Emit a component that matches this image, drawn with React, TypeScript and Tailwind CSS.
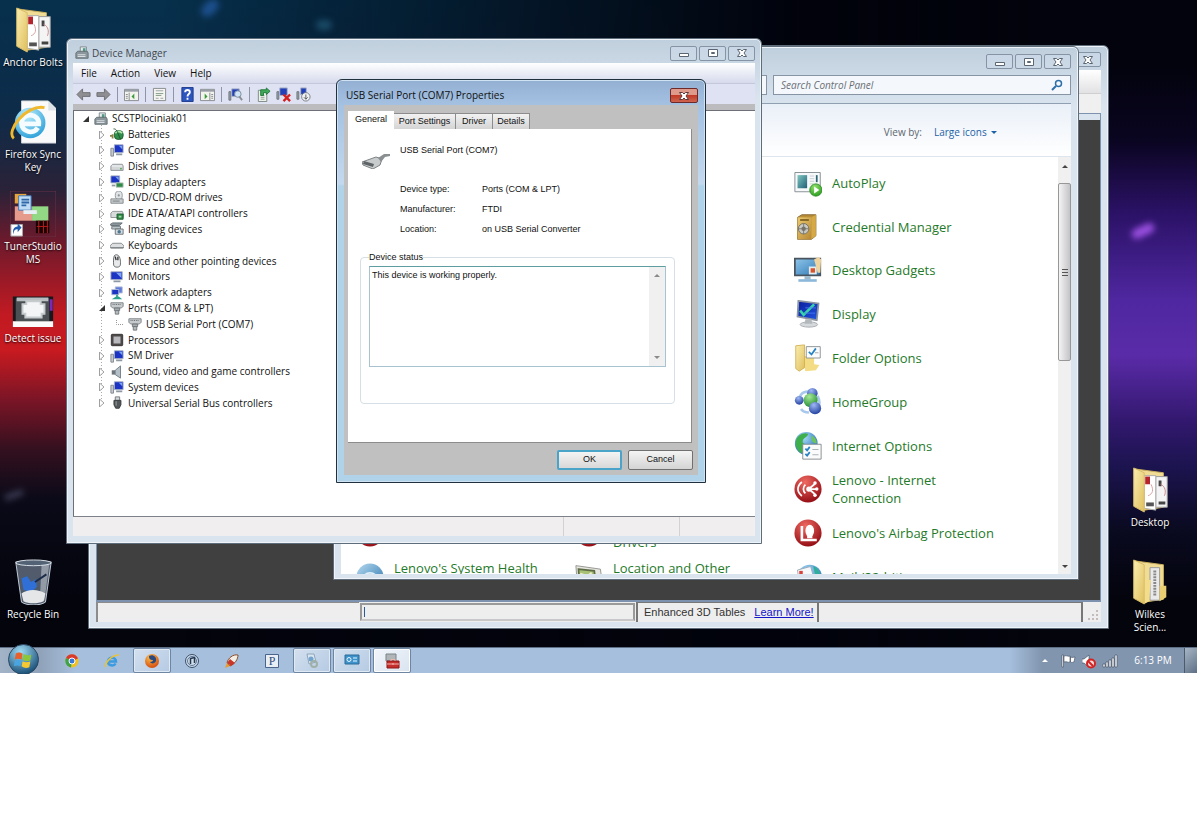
import { ReactNode } from "react";

const smallIcons: Record<string, ReactNode> = {
  root: (
    <>
      <path d="M6 1h7v8H6z" fill="#e8ecec" stroke="#77838a" />
      <path d="M9 2.5h3v5H9z" fill="#4f9a86" />
      <path d="M1 8l2-2h11l1 2v6H1z" fill="#8b969c" stroke="#5f6a70" />
      <path d="M3 10h9M3 12h9" stroke="#e3e8ea" />
    </>
  ),
  battery: (
    <>
      <path d="M0 9h4M3 7v5" stroke="#8a8143" strokeWidth="2" />
      <rect x="5" y="3" width="10" height="10" rx="4" fill="#2f8f4a" stroke="#1d5a2e" />
      <path d="M6 6c3-3 6-2 8 0" stroke="#a8e0a8" strokeWidth="2" fill="none" />
      <path d="M4 1c4 0 4 3 8 12" stroke="#244c2b" fill="none" />
    </>
  ),
  computer: (
    <>
      <path d="M1 6h3v9H1z" fill="#c3c9ce" stroke="#7d858c" />
      <path d="M5 2h10v9H5z" fill="#1b34c4" stroke="#a9b3c4" />
      <path d="M10 3h4v4z" fill="#7da4f2" />
      <path d="M7 13h7" stroke="#8e98a2" strokeWidth="2" />
    </>
  ),
  monitor: (
    <>
      <path d="M1 2h13v9H1z" fill="#1b34c4" stroke="#a9b3c4" />
      <path d="M7 3h6v6z" fill="#7da4f2" />
      <path d="M4 13h8" stroke="#8e98a2" strokeWidth="2" />
    </>
  ),
  disk: (
    <>
      <path d="M1 8l2-2h11l1 2v5H1z" fill="#d4d7d8" stroke="#888e91" />
      <path d="M2 8h12" stroke="#f7f8f8" />
      <circle cx="12.5" cy="11" r="1" fill="#4ba54f" />
    </>
  ),
  display: (
    <>
      <path d="M1 1h10v8H1z" fill="#1b34c4" stroke="#a9b3c4" />
      <path d="M6 2h4v4z" fill="#7da4f2" />
      <path d="M7 9h8v5H7z" fill="#2f8a45" stroke="#b9c6bc" />
      <path d="M2 12h4" stroke="#8e98a2" strokeWidth="2" />
    </>
  ),
  dvd: (
    <>
      <ellipse cx="10" cy="5" rx="4" ry="5" fill="#dfe3e5" stroke="#8b9194" />
      <circle cx="10" cy="5" r="1.2" fill="#8b9194" />
      <path d="M1 9h14v5H1z" fill="#c9cdcf" stroke="#7f8689" />
      <path d="M3 11.5h8" stroke="#6b7275" />
    </>
  ),
  ide: (
    <>
      <path d="M1 7l2-2h11l1 2v5H1z" fill="#d9dcdc" stroke="#888e91" />
      <path d="M8 8h7v6H8z" fill="#2f8a45" stroke="#1c5d2c" />
      <path d="M10 10h3v2h-3z" fill="#a8d4b0" />
    </>
  ),
  imaging: (
    <>
      <path d="M0 3l3-2h11l-3 3H1z" fill="#8b969c" stroke="#5f6a70" />
      <path d="M2 5h10v3H2z" fill="#b9c2c7" stroke="#6d777d" />
      <path d="M6 8h9v6H6z" fill="#d6dbde" stroke="#626b70" />
      <circle cx="10.5" cy="11" r="2" fill="#4d7894" />
    </>
  ),
  keyboard: (
    <>
      <path d="M0 9l3-3h10l3 3v2H0z" fill="#dcdedf" stroke="#7c8285" />
      <path d="M1 11.5h14" stroke="#6c7275" />
    </>
  ),
  mouse: (
    <>
      <path d="M6 1c5-1 6 5 6 9s-1 5-4 5-4-1-4-5 0-8 2-9z" fill="#e8e9ea" stroke="#55595c" />
      <path d="M6 3l1 4M9 3v4" stroke="#333" strokeWidth="1.5" />
    </>
  ),
  network: (
    <>
      <path d="M6 1h8v7H6z" fill="#5e79d8" stroke="#b4bfd9" />
      <path d="M2 4h8v6H2z" fill="#1b34c4" stroke="#b4bfd9" />
      <path d="M2 15l5-3h3l4 3z" fill="#2ea08a" />
      <path d="M8 10v3" stroke="#2ea08a" strokeWidth="2" />
    </>
  ),
  port: (
    <>
      <path d="M1 2h14v4l-2 2H3L1 6z" fill="#c6cacc" stroke="#777e82" />
      <path d="M3 4h10" stroke="#555c60" strokeDasharray="1 1" />
      <path d="M5 8h6v3H5z" fill="#a4aaad" stroke="#6b7276" />
      <path d="M6 11h4v4H6z" fill="#b8bdc0" stroke="#6b7276" />
    </>
  ),
  cpu: (
    <>
      <rect x="1.5" y="1.5" width="13" height="13" rx="1" fill="#4d4949" stroke="#2f2c2c" />
      <path d="M4 4h8v8H4z" fill="#b9b9bd" />
    </>
  ),
  sound: (
    <>
      <path d="M2 6h4v5H2z" fill="#6e767b" />
      <path d="M6 6l6-5v14l-6-4z" fill="#b4bfc8" stroke="#6e7a84" />
    </>
  ),
  usb: (
    <>
      <path d="M6 1h5v4H6z" fill="#d5d8da" stroke="#6b7073" />
      <path d="M4.5 5h8v5l-2 4h-4l-2-4z" fill="#54585b" stroke="#33373a" />
      <path d="M7 6v5" stroke="#a7acaf" />
    </>
  ),
};

type TreeRow = { label: string; icon: string; level: number; state?: "open" | "closed" };

const tree: TreeRow[] = [
  { label: "SCSTPlociniak01", icon: "root", level: 0, state: "open" },
  { label: "Batteries", icon: "battery", level: 1, state: "closed" },
  { label: "Computer", icon: "computer", level: 1, state: "closed" },
  { label: "Disk drives", icon: "disk", level: 1, state: "closed" },
  { label: "Display adapters", icon: "display", level: 1, state: "closed" },
  { label: "DVD/CD-ROM drives", icon: "dvd", level: 1, state: "closed" },
  { label: "IDE ATA/ATAPI controllers", icon: "ide", level: 1, state: "closed" },
  { label: "Imaging devices", icon: "imaging", level: 1, state: "closed" },
  { label: "Keyboards", icon: "keyboard", level: 1, state: "closed" },
  { label: "Mice and other pointing devices", icon: "mouse", level: 1, state: "closed" },
  { label: "Monitors", icon: "monitor", level: 1, state: "closed" },
  { label: "Network adapters", icon: "network", level: 1, state: "closed" },
  { label: "Ports (COM & LPT)", icon: "port", level: 1, state: "open" },
  { label: "USB Serial Port (COM7)", icon: "port", level: 2 },
  { label: "Processors", icon: "cpu", level: 1, state: "closed" },
  { label: "SM Driver", icon: "computer", level: 1, state: "closed" },
  { label: "Sound, video and game controllers", icon: "sound", level: 1, state: "closed" },
  { label: "System devices", icon: "computer", level: 1, state: "closed" },
  { label: "Universal Serial Bus controllers", icon: "usb", level: 1, state: "closed" },
];

const indents = ["pl-2", "pl-6", "pl-[42px]"];

const panelIcons: Record<string, ReactNode> = {
  autoplay: (
    <>
      <path d="M1 4h29v22H1z" fill="#f6f8f9" stroke="#7b858c" />
      <path d="M4 7h11v15H4z" fill="url(#teal)" />
      <path d="M18 8h5M18 11h5M18 14h5M18 17h4" stroke="#c3ccd2" />
      <path d="M26 7v8" stroke="#2c6372" strokeWidth="2" />
      <circle cx="25" cy="24" r="7" fill="url(#play)" stroke="#2b8a22" />
      <path d="M23 20l6 4-6 4z" fill="#fff" />
    </>
  ),
  credential: (
    <>
      <path d="M4 5l5-3h16v24l-5 4H4z" fill="#b98f37" stroke="#80602a" />
      <path d="M4 5h16v25H4z" fill="url(#gold)" />
      <path d="M20 5l5-3v24l-5 4z" fill="#d5a946" />
      <circle cx="11" cy="18" r="6" fill="#c9c9c4" stroke="#6c6a60" />
      <circle cx="11" cy="18" r="2.5" fill="#76746a" />
      <path d="M11 12v12M5 18h12" stroke="#76746a" />
      <path d="M7 8h10" stroke="#7d6021" strokeWidth="2" />
    </>
  ),
  gadgets: (
    <>
      <path d="M1 3h29v19H1z" fill="url(#sky)" stroke="#49545e" strokeWidth="2" />
      <path d="M12 23h7v4h-7z" fill="#9db9cc" />
      <path d="M5 28h21" stroke="#8db8da" strokeWidth="3" />
      <path d="M17 12h9v9h-9z" fill="#e5ecef" />
      <path d="M19 14h5v5h-5z" fill="#d9542b" />
      <path d="M23 4l5-3 3 3-1 15h-3z" fill="#efd4a0" />
    </>
  ),
  display: (
    <>
      <path d="M5 1l23 3-2 19-22-4z" fill="url(#navy)" stroke="#8b94a0" strokeWidth="2" />
      <path d="M7 12l4 5L23 5" stroke="#37d4a8" strokeWidth="3" fill="none" />
      <path d="M13 9h12M12 15h12" stroke="#4a7cf0" />
      <ellipse cx="17" cy="28" rx="10" ry="3" fill="#d6d9dc" stroke="#a3a8ad" />
      <path d="M13 22h7l1 5h-9z" fill="#b3b8bd" />
    </>
  ),
  folder: (
    <>
      <path d="M9 14l14-1v10l6 1-4 6-12 1z" fill="#f3dc84" />
      <path d="M2 2l10-1v26l-6 4-4-3z" fill="url(#folder)" stroke="#d1b054" />
      <path d="M14 3h16v13H14z" fill="#fcfcfc" stroke="#858b8f" />
      <path d="M17 9l3 3 5-7" stroke="#2783c4" strokeWidth="2" fill="none" />
      <path d="M24 10h4" stroke="#97a0a6" />
    </>
  ),
  homegroup: (
    <>
      <path d="M6 12C8 4 14 3 21 5M27 9c3 6 3 10 0 15M8 24c2 3 5 4 9 4" stroke="#a8c8ec" strokeWidth="3" fill="none" />
      <circle cx="21" cy="6" r="6" fill="url(#ball)" />
      <circle cx="6" cy="14" r="5" fill="url(#ball)" />
      <circle cx="19" cy="14" r="8" fill="url(#green)" />
      <circle cx="24" cy="23" r="7" fill="url(#ball)" />
    </>
  ),
  internet: (
    <>
      <circle cx="14" cy="13" r="13" fill="url(#ball2)" />
      <path d="M4 6c5-5 9-5 12-4 0 4-5 4-6 8s4 3 4 7-3 6-6 7C2 20 0 12 4 6z" fill="#3fae4c" />
      <path d="M20 4c4 2 6 5 6 9-3 0-5-2-6-4z" fill="#6cc45c" />
      <path d="M10 14h21v17H10z" fill="#fbfbfb" stroke="#7e868b" />
      <path d="M13 19l2 2 3-4M13 25l2 2 3-4" stroke="#2783c4" strokeWidth="2" fill="none" />
      <path d="M21 20h7M21 26h7" stroke="#a1a8ad" />
    </>
  ),
  connection: (
    <>
      <circle cx="16" cy="16" r="15.5" fill="url(#red)" />
      <path d="M9 8c-6 5-6 11 0 16M13 11c-3 3-3 7 0 10" stroke="#fff" strokeWidth="2" fill="none" />
      <circle cx="17" cy="16" r="3" fill="#fff" />
      <path d="M17 16h9M17 16l7-6M17 16l7 6" stroke="#fff" strokeWidth="2" />
      <circle cx="26" cy="16" r="2" fill="#fff" />
      <circle cx="24" cy="9" r="2" fill="#fff" />
      <circle cx="24" cy="23" r="2" fill="#fff" />
    </>
  ),
  airbag: (
    <>
      <circle cx="16" cy="16" r="15.5" fill="url(#red)" />
      <path d="M9 8v16h17" stroke="#fff" strokeWidth="3" fill="none" />
      <ellipse cx="18" cy="13.5" rx="5" ry="7" fill="#fff" />
      <path d="M15 19h6v3h-6z" fill="#fff" />
    </>
  ),
  red: <circle cx="16" cy="16" r="15.5" fill="url(#red)" />,
  mail: (
    <>
      <circle cx="18" cy="16" r="14" fill="url(#ball2)" />
      <path d="M22 3c7 4 9 8 8 16-5-2-7-8-8-16z" fill="#2fae9c" />
      <path d="M4 8l15-4 4 14-17 5z" fill="#f6f8fa" stroke="#97a7b5" />
      <path d="M6 9h4v4H6z" fill="#d8423a" />
    </>
  ),
  health: (
    <>
      <circle cx="16" cy="16" r="15.5" fill="url(#steel)" />
      <path d="M9 15c3-5 11-5 14 0M9 18h14" stroke="#e0f1fb" strokeWidth="2" fill="none" />
    </>
  ),
  location: (
    <>
      <path d="M1 3l28 4 3 20-29 2z" fill="#e6e7e1" stroke="#8b8d86" />
      <path d="M4 7l18 2 2 14H5z" fill="#a7c276" stroke="#5e6b46" strokeWidth="2" />
      <path d="M6 12l8 3 5-4" stroke="#f2f2c9" strokeWidth="2" fill="none" />
    </>
  ),
};

const panelItems = [
  { label: "AutoPlay", icon: "autoplay" },
  { label: "Credential Manager", icon: "credential" },
  { label: "Desktop Gadgets", icon: "gadgets" },
  { label: "Display", icon: "display" },
  { label: "Folder Options", icon: "folder" },
  { label: "HomeGroup", icon: "homegroup" },
  { label: "Internet Options", icon: "internet" },
  { label: "Lenovo - Internet Connection", icon: "connection" },
  { label: "Lenovo's Airbag Protection", icon: "airbag" },
  { label: "Mail (32-bit)", icon: "mail" },
];

function Gradients() {
  const linear: [string, string, string][] = [
    ["teal", "#7fc8c0", "#205f78"],
    ["gold", "#ecca72", "#b78732"],
    ["sky", "#8fc6ea", "#2f78b5"],
    ["navy", "#0a1c9e", "#2357e0"],
    ["folder", "#fbeeb0", "#dfbf5e"],
    ["steel", "#b5daf0", "#2873ab"],
  ];
  const radial: [string, string, string][] = [
    ["play", "#8fe06a", "#2a9a20"],
    ["ball", "#9fb8f4", "#1c3c9c"],
    ["ball2", "#a5dcf8", "#1f64b0"],
    ["ie", "#bdeefc", "#2a9fd8"],
    ["green", "#a5e898", "#1f8a2e"],
    ["red", "#f06a62", "#8f0810"],
    ["orb", "#9fdcf6", "#12466e"],
    ["fox", "#ffc04a", "#d1470d"],
  ];
  return (
    <svg className="absolute h-0 w-0" aria-hidden="true">
      <defs>
        {linear.map(([id, from, to]) => (
          <linearGradient key={id} id={id} x1="0" y1="0" x2="1" y2="1">
            <stop offset="0" stopColor={from} />
            <stop offset="1" stopColor={to} />
          </linearGradient>
        ))}
        {radial.map(([id, from, to]) => (
          <radialGradient key={id} id={id} cx="0.4" cy="0.25" r="0.8">
            <stop offset="0" stopColor={from} />
            <stop offset="1" stopColor={to} />
          </radialGradient>
        ))}
      </defs>
    </svg>
  );
}

function SmallIcon({ children, className = "h-3.5 w-3.5" }: { children: ReactNode; className?: string }) {
  return (
    <svg viewBox="0 0 16 16" fill="none" className={`flex-none ${className}`}>
      {children}
    </svg>
  );
}

function Caret({ dir }: { dir: "up" | "down" }) {
  return (
    <svg viewBox="0 0 6 3" className="h-[3px] w-[6px]">
      <path d={dir === "up" ? "M0 3l3-3 3 3z" : "M0 0l3 3 3-3z"} fill="currentColor" />
    </svg>
  );
}

function WindowButton({ kind }: { kind: "Minimize" | "Maximize" | "Close" }) {
  return (
    <button
      type="button"
      aria-label={kind}
      className="grid h-[15px] w-[27px] place-items-center rounded-xs border border-[#8594a5] bg-[#cddbe9]/60"
    >
      <svg viewBox="0 0 12 10" className="h-2.5 w-3" fill="#fff" stroke="#5b6673">
        {kind === "Minimize" && <path d="M1.5 5.5h9v3h-9z" />}
        {kind === "Maximize" && (
          <>
            <path d="M1.5 1.5h9v7h-9z" />
            <path d="M4.5 4.5h3v1h-3z" />
          </>
        )}
        {kind === "Close" && <path d="M1.5 1.5h3L6 3l1.5-1.5h3L8 5l2.5 3.5h-3L6 7 4.5 8.5h-3L4 5z" />}
      </svg>
    </button>
  );
}

function WindowButtons() {
  return (
    <div className="flex gap-0.5">
      <WindowButton kind="Minimize" />
      <WindowButton kind="Maximize" />
      <WindowButton kind="Close" />
    </div>
  );
}

function Window({ children, className }: { children: ReactNode; className: string }) {
  return (
    <section
      className={`absolute flex flex-col rounded-t-md border border-[#5f6c7a] bg-[#d9e4ef] bg-[linear-gradient(#c0cfdd,#d9e4ef_60px)] shadow-[inset_0_0_0_1px_#eef4fa] ${className}`}
    >
      {children}
    </section>
  );
}

function TunerWindow() {
  return (
    <Window className="left-[88px] top-[45px] h-[584px] w-[1021px] px-[7px] pb-1.5">
      <div className="flex h-6 flex-none items-start justify-end pt-1.5">
        <WindowButton kind="Close" />
      </div>
      <div className="h-[23px] flex-none bg-gradient-to-b from-white to-[#e2e2e4]" />
      <div className="h-5 flex-none border-t border-[#d0d0d0] bg-[#f0f0f0]" />
      <div className="flex-1 border border-b-2 border-[#7c92ae] bg-[#404040] shadow-[inset_0_6px_0_#d9e4ef]" />
      <div className="flex h-5 flex-none bg-[#eeeeee] font-['Liberation_Sans',sans-serif] text-[11px] text-[#333]">
        <div className="w-[263px] border-l-2 border-t border-[#8c8c8c]" />
        <div className="m-px w-[275px] border-2 border-[#9a9a9a] border-b-[#c8c8c8] py-0.5 pl-0.5">
          <div className="h-full w-px bg-[#2a5a9a]" />
        </div>
        <div className="flex w-[181px] items-center gap-[9px] whitespace-nowrap border-l-2 border-t border-[#777] pl-1.5">
          <span>Enhanced 3D Tables</span>
          <a href="#learn" className="text-[#1414c8] underline">
            Learn More!
          </a>
        </div>
        <div className="flex-1 border-l-2 border-r-2 border-t border-[#777]" />
        <svg viewBox="0 0 18 20" className="h-5 w-[18px]" fill="#c4bcbc">
          <path d="M13 8h2v2h-2zM13 12h2v2h-2zM13 16h2v2h-2zM9 12h2v2H9zM9 16h2v2H9zM5 16h2v2H5z" />
        </svg>
      </div>
    </Window>
  );
}

function PanelItem({ label, icon, labelClass = "" }: { label?: string; icon: string; labelClass?: string }) {
  return (
    <a href="#item" className="flex items-center gap-2.5 text-[13px] leading-[18px] text-[#1f7a2a]">
      <svg viewBox="0 0 32 32" fill="none" className="h-7 w-7 flex-none">
        {panelIcons[icon]}
      </svg>
      {label && <span className={`w-[170px] ${labelClass}`}>{label}</span>}
    </a>
  );
}

function ControlPanelWindow() {
  return (
    <Window className="left-[333px] top-[46px] h-[534px] w-[746px] px-[7px] pb-[5px]">
      <div className="flex flex-none justify-end pt-[7px]">
        <WindowButtons />
      </div>
      <div className="mb-2 mt-1.5 flex h-5 flex-none gap-1.5">
        <div className="flex-1 border border-[#8794a3] bg-[#f4f8fc]" />
        <label className="flex w-[298px] items-center border border-[#8794a3] bg-[#f4f8fc] px-[7px]">
          <input
            type="search"
            aria-label="Search Control Panel"
            placeholder="Search Control Panel"
            className="min-w-0 flex-1 bg-transparent text-[10px] italic outline-none placeholder:text-[#6a6f76]"
          />
          <svg viewBox="0 0 12 12" className="h-3 w-3" fill="none" stroke="#2f6fa8">
            <circle cx="7.5" cy="4.5" r="3" strokeWidth="1.5" />
            <path d="M5 7l-4 4" strokeWidth="2" />
          </svg>
        </label>
      </div>
      <div className="flex h-[54px] flex-none items-center justify-end gap-3 border-b border-t border-b-[#dfe5ec] border-t-[#8fa0b2] bg-gradient-to-b from-[#eaf0f8] to-white pr-[74px] pt-1 text-[10px]">
        <label htmlFor="view" className="text-[#5d6670]">
          View by:
        </label>
        <div className="flex items-center gap-1 text-[#1c62a8]">
          <select id="view" className="appearance-none outline-none">
            <option>Large icons</option>
          </select>
          <Caret dir="down" />
        </div>
      </div>
      <div className="flex min-h-0 flex-1 overflow-hidden bg-white">
        <div className="flex flex-1 pl-[15px] pt-1">
          <div className="grid h-[438px] w-[219px] grid-rows-10">
            <div className="row-span-8" />
            <PanelItem icon="red" />
            <PanelItem label="Lenovo's System Health" icon="health" labelClass="pb-[18px]" />
          </div>
          <div className="grid h-[438px] w-[219px] grid-rows-10">
            <div className="row-span-8" />
            <PanelItem label="Drivers" icon="red" labelClass="pt-[18px]" />
            <PanelItem label="Location and Other" icon="location" labelClass="pb-[18px]" />
          </div>
          <div className="grid h-[438px] flex-1 grid-rows-10">
            {panelItems.map((item) => (
              <PanelItem key={item.label} {...item} />
            ))}
          </div>
        </div>
        <div className="flex w-[13px] flex-none flex-col items-center bg-[#f0f0f0] text-[#444]">
          <div className="grid h-[26px] flex-none place-items-center pb-2">
            <Caret dir="up" />
          </div>
          <div className="grid h-[178px] w-full flex-none place-items-center rounded-xs border border-[#979797] bg-gradient-to-r from-[#f4f4f4] to-[#c4c4c8]">
            <svg viewBox="0 0 6 7" className="h-[7px] w-[6px]" stroke="#555">
              <path d="M0 .5h6M0 3.5h6M0 6.5h6" />
            </svg>
          </div>
          <div className="mt-auto grid h-4 place-items-center">
            <Caret dir="down" />
          </div>
        </div>
      </div>
    </Window>
  );
}

const pane = (
  <>
    <path d="M.5 2.5h15v12H.5z" fill="#f2f3ec" stroke="#85898f" />
    <path d="M1 4h14" stroke="#9a9ea6" strokeWidth="2" />
  </>
);

const toolGroups: { name: string; icon: ReactNode }[][] = [
  [
    { name: "Back", icon: <path d="M1 8l6-6v4h8v4H7v4z" fill="#8f8f93" stroke="#6d6d72" /> },
    { name: "Forward", icon: <path d="M15 8L9 2v4H1v4h8v4z" fill="#8f8f93" stroke="#6d6d72" /> },
  ],
  [
    {
      name: "Show tree",
      icon: (
        <>
          {pane}
          <path d="M5.5 6v8M2 8h2M2 10h2M2 12h2" stroke="#85898f" />
          <path d="M11 7l-3 3 3 3z" fill="#3c9a3a" />
        </>
      ),
    },
  ],
  [
    {
      name: "Properties",
      icon: (
        <>
          <path d="M1.5 1.5h13v13h-13z" fill="#f5f5f0" stroke="#85898f" />
          <path d="M4 4h8M4 12h3M9 12h3" stroke="#9a9ea6" />
          <path d="M4 7h8M4 9h6" stroke="#7f9a86" />
        </>
      ),
    },
  ],
  [
    {
      name: "Help",
      icon: (
        <>
          <path d="M2 .5h12v15H2z" fill="#2c55bd" stroke="#1c3a8c" />
          <path d="M5.5 5.5c0-3 5-3 5 0 0 2-2.5 2-2.5 4.5M8 11.5v2" stroke="#fff" strokeWidth="2" />
        </>
      ),
    },
    {
      name: "Action pane",
      icon: (
        <>
          {pane}
          <path d="M10.5 6v8M12 8h2M12 10h2M12 12h2" stroke="#85898f" />
          <path d="M5 7l3 3-3 3z" fill="#3c9a3a" />
        </>
      ),
    },
  ],
  [
    {
      name: "Scan for hardware changes",
      icon: (
        <>
          <path d="M1 5h2v9H1z" fill="#9aa2aa" stroke="#6b737b" />
          <path d="M4 2h8v8H4z" fill="#2440b8" stroke="#aab3c4" />
          <circle cx="10.5" cy="7.5" r="3.5" fill="#cfe4f6" stroke="#7a8a9c" />
          <path d="M12 10l3 4" stroke="#8a8f96" strokeWidth="2" />
        </>
      ),
    },
  ],
  [
    {
      name: "Update driver",
      icon: (
        <>
          <path d="M2.5 3.5h9v12h-9z" fill="#eef0ee" stroke="#7a8a80" />
          <path d="M5 9h4M5 11h4M5 13h4" stroke="#8fa095" />
          <path d="M5 3h6V1l4 3.5L11 8V6H8v3H5z" fill="#3fa85a" stroke="#237a3b" />
        </>
      ),
    },
    {
      name: "Uninstall",
      icon: (
        <>
          <path d="M1 5h2v8H1z" fill="#9aa2aa" stroke="#6b737b" />
          <path d="M4 1h8v8H4z" fill="#2440b8" stroke="#aab3c4" />
          <path d="M8 8l7 7M15 8l-7 7" stroke="#d41f1f" strokeWidth="2.5" />
        </>
      ),
    },
    {
      name: "Disable",
      icon: (
        <>
          <path d="M1 5h2v8H1z" fill="#9aa2aa" stroke="#6b737b" />
          <path d="M5 1h6v7H5z" fill="#2440b8" stroke="#aab3c4" />
          <circle cx="10.5" cy="10.5" r="4.5" fill="#f0f1f3" stroke="#777e86" />
          <path d="M10.5 8v5M8.5 11l2 2 2-2" stroke="#555" />
        </>
      ),
    },
  ],
];

function TreeItem({ row }: { row: TreeRow }) {
  return (
    <li className={`flex flex-1 items-center gap-1 ${indents[row.level]}`}>
      <svg viewBox="0 0 8 8" fill="none" className="h-2 w-2 flex-none">
        {row.state === "open" && <path d="M7 1v6H1z" fill="#333" />}
        {row.state === "closed" && <path d="M1.5 0v8l4.5-4z" fill="#fff" stroke="#a0a0a0" />}
        {!row.state && <path d="M.5 0v4.5H8" stroke="#999" strokeDasharray="1 1" />}
      </svg>
      <SmallIcon>{smallIcons[row.icon]}</SmallIcon>
      <span className="whitespace-nowrap">{row.label}</span>
    </li>
  );
}

function DeviceManagerWindow() {
  return (
    <Window className="left-[66px] top-[38px] h-[506px] w-[696px] px-1.5 pb-[7px]">
      <header className="flex h-6 flex-none items-center gap-[3px] pl-0.5 pt-1 text-[10px] text-[#3e4650]">
        <SmallIcon>{smallIcons.root}</SmallIcon>
        <h1 className="flex-1">Device Manager</h1>
        <WindowButtons />
      </header>
      <nav className="flex h-5 flex-none items-center gap-[14px] bg-gradient-to-b from-white to-[#d6daec] pl-2 text-[10px] text-[#111]">
        {["File", "Action", "View", "Help"].map((name) => (
          <button key={name} type="button">
            {name}
          </button>
        ))}
      </nav>
      <div className="flex h-[21px] flex-none items-center border-t border-[#c3c8da] bg-[#dfe2f2] pl-[3px]">
        {toolGroups.map((group, i) => (
          <div
            key={i}
            className="flex items-center gap-[5px] border-r border-[#8f94a8] px-1.5 first:pl-0 last:border-r-0"
          >
            {group.map((tool) => (
              <button key={tool.name} type="button" aria-label={tool.name}>
                <SmallIcon className="h-[15px] w-[15px]">{tool.icon}</SmallIcon>
              </button>
            ))}
          </div>
        ))}
      </div>
      <div className="h-[6px] flex-none bg-[#bcbcbe]" />
      <div className="flex-1 border-l border-t border-[#6d7177] bg-white">
        <ul className="flex h-[300px] flex-col bg-[repeating-linear-gradient(#aaa_0_1px,transparent_1px_3px)] bg-[length:1px_280px] bg-[position:27px_14px] bg-no-repeat text-[10px] text-[#111]">
          {tree.map((row) => (
            <TreeItem key={row.label} row={row} />
          ))}
        </ul>
      </div>
      <footer className="flex h-5 flex-none border-t border-[#7d8188] bg-[#f0eeee]">
        <div className="flex-1" />
        <div className="w-[116px] border-l border-[#d3d1d1]" />
        <div className="w-[76px] border-l border-[#d3d1d1]" />
      </footer>
    </Window>
  );
}

const details = [
  ["Device type:", "Ports (COM & LPT)"],
  ["Manufacturer:", "FTDI"],
  ["Location:", "on USB Serial Converter"],
];

function PropertiesDialog() {
  return (
    <section
      role="dialog"
      aria-labelledby="dialog-title"
      className="absolute left-[336px] top-[79px] flex h-[404px] w-[370px] flex-col rounded-t-md border border-[#20303c] bg-[linear-gradient(#93afd2,#a5c2e3_26px,#c4d9ee_104px,#b0d3ea_106px)] px-[7px] pb-[7px] font-['Liberation_Sans',sans-serif] text-[9px] text-[#111] shadow-[inset_0_0_0_1px_#cfe2f4]"
    >
      <header className="flex h-[25px] flex-none items-center justify-between pb-0.5 pl-0.5 pt-2">
        <h2 id="dialog-title" className="font-['Open_Sans',sans-serif] text-[10px]">
          USB Serial Port (COM7) Properties
        </h2>
        <button
          type="button"
          aria-label="Close"
          className="grid h-[15px] w-7 place-items-center rounded-xs border border-[#6d2a28] bg-[linear-gradient(#e09a8c_45%,#c03a26_50%,#cf6450)]"
        >
          <svg viewBox="0 0 12 10" className="h-2.5 w-3" fill="#fff" stroke="#5b3a3a">
            <path d="M1.5 1.5h3L6 3l1.5-1.5h3L8 5l2.5 3.5h-3L6 7 4.5 8.5h-3L4 5z" />
          </svg>
        </button>
      </header>
      <div className="flex flex-1 flex-col bg-[#c0c0c0] px-1 pt-1.5">
        <div role="tablist" className="flex h-[18px] flex-none items-end">
          <button type="button" role="tab" aria-selected="true" className="h-[18px] w-[46px] bg-white">
            General
          </button>
          {[
            ["Port Settings", "w-[62px]"],
            ["Driver", "w-[37px]"],
            ["Details", "w-[37px]"],
          ].map(([name, width]) => (
            <button
              key={name}
              type="button"
              role="tab"
              aria-selected="false"
              className={`h-4 border border-b-0 border-l-0 border-[#8c8c8c] bg-gradient-to-b from-[#f2f2f2] to-[#d4d4d4] ${width}`}
            >
              {name}
            </button>
          ))}
        </div>
        <div className="mr-[2px] flex-1 border-b border-r border-[#8c8c8c] bg-white px-3 pt-3">
          <div className="flex h-5 items-center gap-2.5 pl-0.5">
            <svg viewBox="0 0 28 16" className="mt-5 h-4 w-7" fill="none">
              <path d="M0 9l14-5 6 2-2 6-7 4L1 12z" fill="#c9cccd" stroke="#7d8284" />
              <path d="M1 11l10 3 1-3L2 8z" fill="#5f6466" />
              <path d="M16 5l6-4h6v2l-5 1-4 5z" fill="#8a8f91" />
            </svg>
            <p>USB Serial Port (COM7)</p>
          </div>
          <dl className="mt-[18px] grid grid-cols-[82px_1fr] pl-10 leading-5">
            {details.map(([term, value]) => (
              <div key={term} className="contents">
                <dt>{term}</dt>
                <dd>{value}</dd>
              </div>
            ))}
          </dl>
          <fieldset className="mr-1 mt-3 rounded-sm border border-[#d5dfe5] px-2 pb-9">
            <legend className="leading-3">
              <label htmlFor="status">Device status</label>
            </legend>
            <div className="mt-[3px] flex h-[101px] border border-[#a6c3cf] border-t-[#5f9ea0]">
              <textarea
                id="status"
                readOnly
                value="This device is working properly."
                className="flex-1 resize-none px-0.5 py-0.5 leading-3 outline-none"
              />
              <div className="flex w-4 flex-col items-center justify-between bg-[#f0f0f0] py-[7px] text-[#8a8a8a]">
                <Caret dir="up" />
                <Caret dir="down" />
              </div>
            </div>
          </fieldset>
        </div>
        <div className="flex h-8 flex-none items-center justify-end gap-1.5 pr-px pt-0.5">
          <button
            type="button"
            className="h-5 w-[65px] rounded-xs border-2 border-[#4aa3c8] bg-gradient-to-b from-[#f4f4f4] to-[#d8d8d8]"
          >
            OK
          </button>
          <button
            type="button"
            className="h-5 w-[65px] rounded-xs border border-[#707070] bg-gradient-to-b from-[#f4f4f4] to-[#d4d4d4]"
          >
            Cancel
          </button>
        </div>
      </div>
    </section>
  );
}

const folderBack = <path d="M8 2l30 4v36l-20 3-10-6z" fill="#f0dc94" stroke="#cbb05c" />;
const folderFront = <path d="M7 1l11 5v41L7 41z" fill="url(#folder)" stroke="#d8bd68" />;

const pdfFolder = (
  <>
    {folderBack}
    <path d="M30 10h12v32H30z" fill="#f4f4f4" stroke="#999" />
    <path d="M33 14h3v6h-3zM33 36h7v3h-7z" fill="#444" />
    <path d="M35 18c5 2 6 8 4 12" stroke="#c9868a" />
    <path d="M18 9h12v36l-12-2z" fill="#fff" stroke="#aaa" />
    <path d="M19 10h5v8h-5z" fill="#b5232b" />
    <path d="M22 30c5-2 6-6 3-12" stroke="#d9a0a0" />
    <path d="M20 37h8v4h-8z" fill="#555" />
    {folderFront}
  </>
);

const desktopIcons: Record<string, ReactNode> = {
  anchor: pdfFolder,
  desktop: pdfFolder,
  wilkes: (
    <>
      {folderBack}
      <path d="M24 9h10v34H24z" fill="#e9e9e9" stroke="#999" />
      <path d="M29 12v26" stroke="#888" strokeWidth="3" strokeDasharray="2 1" />
      <path d="M34 28h7v12l-7 4z" fill="#e9cf72" />
      <path d="M18 22h7l-2 22-5 3z" fill="#f3dd8c" />
      {folderFront}
    </>
  ),
  sync: (
    <>
      <path d="M12 2h28l10 10v34H12z" fill="#fafafa" stroke="#cdd2d6" />
      <path d="M40 2v10h10z" fill="#dde2e6" />
      <circle cx="21" cy="25" r="16" fill="url(#ie)" />
      <path d="M12 26h18c1-11-17-13-18-1 0 10 13 12 17 5" stroke="#f4fcff" strokeWidth="5" fill="none" />
      <path d="M4 41C-5 34 17 5 36 9" stroke="#f0b82c" strokeWidth="3" fill="none" />
    </>
  ),
  tuner: (
    <>
      <path d="M0 0h48v48H0z" stroke="#6b3348" />
      <path d="M5 3h12v10H5z" fill="#e8a33c" />
      <path d="M5 16h18v15H5z" fill="#e59a8c" />
      <path d="M23 16h17v15H23z" fill="#93d884" />
      <path d="M9 5h13v15H9z" fill="#bfdcf4" stroke="#3f78b8" />
      <path d="M12 9h8M12 12h8M12 15h5" stroke="#2f67a8" strokeWidth="2" />
      <path d="M14 22h14" stroke="#e8eef5" strokeWidth="4" />
      <path d="M27 31h14v13H27z" fill="#180405" />
      <path d="M30 31v13M35 31v13M39 31v13M28 37h12" stroke="#b81d1d" />
      <path d="M1 35h12v12H1z" fill="#fff" stroke="#aaa" />
      <path d="M4 45c0-4 1-5 4-5v3l4-5-4-4v3c-4 0-6 4-4 8z" fill="#1f5db0" />
    </>
  ),
  detect: (
    <>
      <path d="M3 14h42v30H3z" fill="#17181d" />
      <path d="M6 16h35v24H6z" fill="#4b5054" />
      <path d="M7 15h33v4H7z" fill="#b8bec2" />
      <path d="M17 19h15v3h4v10h-3v4H16v-4h-3V22h4z" fill="#f3f5f6" stroke="#c6cbce" strokeWidth="2" />
      <path d="M43 17v12" stroke="#7a2ab8" strokeWidth="3" />
      <path d="M3 40h42v6H3z" fill="#fbfbfb" />
    </>
  ),
  recycle: (
    <>
      <path d="M6 3h37l-6 42c-6 4-19 4-25 0z" fill="#8fa3b8" fillOpacity=".55" stroke="#c4cfda" />
      <path d="M33 5h8l-5 38-5 2z" fill="#dfe7ee" fillOpacity=".45" />
      <path d="M12 20l6-2 4 6 5-3 1 8-6 6-8-3z" fill="#2f6fd6" />
      <path d="M26 24l12-8" stroke="#1c2b4a" strokeWidth="2" />
      <path d="M12 36c6-5 18-5 25 0l-2 8c-6 3-16 3-21 0z" fill="#e4e6e8" />
      <ellipse cx="24.5" cy="4" rx="18.5" ry="3" fill="#536274" stroke="#dbe3ea" />
    </>
  ),
};

function DesktopIcon({ icon, label, className = "" }: { icon: string; label: string; className?: string }) {
  return (
    <button type="button" className={`flex flex-col items-center gap-[3px] ${className}`}>
      <svg viewBox="0 0 48 48" fill="none" className="h-[46px] w-[46px] flex-none">
        {desktopIcons[icon]}
      </svg>
      <span className="whitespace-pre-line text-[10px] leading-[13px] text-white [text-shadow:0_1px_2px_#000]">
        {label}
      </span>
    </button>
  );
}

const taskItems: { name: string; state: "pinned" | "open" | "active"; icon: ReactNode }[] = [
  {
    name: "Chrome",
    state: "pinned",
    icon: (
      <>
        <circle cx="8" cy="8" r="6.5" fill="#f2c21c" />
        <path d="M8 8L2 5A6.500 6.500 0 0 1 14 5.500z" fill="#d93a2b" />
        <path d="M8 8l-1 6.400A6.500 6.500 0 0 1 2 5z" fill="#3fa348" />
        <circle cx="8" cy="8" r="3" fill="#3a78d8" stroke="#fff" />
      </>
    ),
  },
  {
    name: "Internet Explorer",
    state: "pinned",
    icon: (
      <>
        <path d="M4 8.5h8c0-5-8-5-8 0 0 4.500 6 5 7.500 2" stroke="#3c9be0" strokeWidth="2.5" />
        <path d="M2 14c-2-3 5-12 13-12" stroke="#e8c23c" strokeWidth="1.5" />
      </>
    ),
  },
  {
    name: "Firefox",
    state: "open",
    icon: (
      <>
        <circle cx="8" cy="8" r="7" fill="url(#fox)" />
        <path d="M5 3c4-2 8 1 7 5-1 3-5 3-6 1 2 0 3-1 3-2-3 0-4-1-4-4z" fill="#28487e" />
      </>
    ),
  },
  {
    name: "iTunes",
    state: "pinned",
    icon: (
      <>
        <circle cx="8" cy="8" r="6.5" fill="#cfdcea" stroke="#3b4f68" />
        <circle cx="8" cy="8" r="4.5" stroke="#5a789c" />
        <path d="M6.5 11V5.500l4-1V10" stroke="#26384e" strokeWidth="1.5" />
      </>
    ),
  },
  {
    name: "Rocket",
    state: "pinned",
    icon: (
      <>
        <path d="M3 10C4 5 9 1 14 2c0 4-3 9-8 11z" fill="#f2eee6" stroke="#8a4a28" />
        <path d="M6 6l5 4-4 3-4-3z" fill="#c8362a" />
        <path d="M1 15l2-5 3 3z" fill="#eb9a2c" />
      </>
    ),
  },
  {
    name: "Pandora",
    state: "pinned",
    icon: (
      <>
        <path d="M1.5 1.5h13v13h-13z" fill="#e8eef6" stroke="#49658c" />
        <text x="8" y="12" textAnchor="middle" className="fill-[#2c4c78] font-['Liberation_Serif',serif] text-[12px]">
          P
        </text>
      </>
    ),
  },
  {
    name: "Tuner",
    state: "open",
    icon: (
      <>
        <path d="M3 1h7l2 8-7 2z" fill="#dbe6f0" stroke="#8fa6bc" />
        <circle cx="7" cy="6" r="2.5" fill="#73a4cf" />
        <circle cx="10" cy="11" r="3" stroke="#9fb0a8" strokeWidth="2" />
      </>
    ),
  },
  {
    name: "Control Panel",
    state: "open",
    icon: (
      <>
        <path d="M1 2h14v9H1z" fill="#3f93cc" stroke="#2a6a98" />
        <circle cx="5" cy="6.5" r="2" stroke="#e8f6ff" />
        <path d="M9 5h4M9 8h4" stroke="#e8f6ff" />
        <path d="M6 12h5l1 3H6z" fill="#b8d4e4" />
      </>
    ),
  },
  {
    name: "Device Manager",
    state: "active",
    icon: (
      <>
        <path d="M2 1h10v7H2z" fill="#b0b6b8" stroke="#7b8487" />
        <path d="M3 8h12v7H3z" fill="#c62d2d" stroke="#8c1717" />
        <path d="M7 8V6.500h4V8M3 11h12M9 10v2" stroke="#f0b4ae" />
      </>
    ),
  },
];

const taskStyles = {
  pinned: "",
  open: "rounded-xs border border-[#6f86a3] bg-[linear-gradient(135deg,#d3e0ef,#b5cae3)] shadow-[inset_0_0_0_1px_#dfeaf5]",
  active: "rounded-xs border border-[#6f86a3] bg-[linear-gradient(135deg,#f2f6fb,#d9e4f1)] shadow-[inset_0_0_0_1px_#fff]",
} as const;

function Taskbar() {
  return (
    <footer className="relative flex h-[26px] items-stretch border-t border-[#5d6f86] bg-[linear-gradient(90deg,#a3b4c8,#8fa2b9_40px,#a6bfdc_75px)]">
      <button type="button" aria-label="Start" className="absolute -top-1 left-2 h-[30px] w-[31px] overflow-hidden">
        <svg viewBox="0 0 32 32" className="h-[31px] w-[31px]">
          <circle cx="16" cy="16" r="15.5" fill="url(#orb)" stroke="#2c4660" />
          <path d="M8 10c3-2 5-1 7 0l-1 6c-3-1-5-1-7 0z" fill="#e8602c" />
          <path d="M16 10c3 2 5 2 8 1l-1 6c-3 1-5 1-8-1z" fill="#8cc63a" />
          <path d="M7 17c3-1 5-1 7 0l-1 6c-2-1-4-1-7 0z" fill="#4aa4e0" />
          <path d="M15 18c3 1 5 1 8 0l-1 6c-3 1-5 1-8-1z" fill="#f6c832" />
        </svg>
      </button>
      <div className="flex flex-1 gap-0.5 pl-[53px]">
        {taskItems.map((item) => (
          <button
            key={item.name}
            type="button"
            aria-label={item.name}
            className={`grid w-[38px] place-items-center ${taskStyles[item.state]}`}
          >
            <SmallIcon className="h-4 w-4">{item.icon}</SmallIcon>
          </button>
        ))}
      </div>
      <div className="flex w-[187px] items-center bg-[linear-gradient(90deg,transparent,#8195af_32px)] pl-8 text-white">
        <button type="button" aria-label="Show hidden icons">
          <Caret dir="up" />
        </button>
        <svg viewBox="0 0 16 16" className="ml-3 h-4 w-4" fill="#fff" stroke="#3d4a5c" strokeWidth=".6">
          <path d="M2 2h1.500v12H2zM4 3c3-1 4 1 6 0v6c-2 1-3-1-6 0zM10.500 4c2 1 3 0 4.500 0l-1 5c-1 0-2 1-3.500 0z" />
        </svg>
        <svg viewBox="0 0 16 16" className="ml-1.5 h-4 w-4" fill="none">
          <path d="M0 6h2l5-4v12l-5-4H0z" fill="#fff" stroke="#3d4a5c" strokeWidth=".6" />
          <circle cx="9" cy="10.5" r="4" fill="#f6dada" stroke="#d42323" strokeWidth="2" />
          <path d="M6 8l5 5" stroke="#d42323" strokeWidth="2" />
        </svg>
        <svg viewBox="0 0 16 16" className="ml-1 h-4 w-4" fill="#fff" stroke="#3d4a5c" strokeWidth=".6">
          <path d="M1 11h2v3H1zM4 9h2v5H4zM7 7h2v7H7zM10 5h2v9h-2zM13 2h2v12h-2z" />
        </svg>
        <time className="flex-1 pl-1 text-center text-[10px]">6:13 PM</time>
        <button
          type="button"
          aria-label="Show desktop"
          className="h-full w-[13px] border-l border-[#4a5b70] bg-[linear-gradient(135deg,#a8b6c6,#5e7086)]"
        />
      </div>
    </footer>
  );
}

function Wallpaper() {
  return (
    <>
      <div className="absolute inset-y-0 left-0 w-2/3 bg-[linear-gradient(#06304c,#0d2c4a_110px,#2a2238_190px,#6b1a2c_240px,#c21a22_315px,#c81a20_350px,#7a1526_400px,#33101f_450px,#0a0a18_500px,#03040c_600px)] [mask-image:linear-gradient(90deg,#000_20%,transparent)]" />
      <div className="absolute inset-y-0 right-0 w-1/3 bg-[linear-gradient(#02030c_60px,#0a0520_140px,#2c1268_215px,#4f27a0_300px,#5a2ba8_355px,#33186f_420px,#1c1450_465px,#0a0a20_530px,#03040c_600px)] [mask-image:linear-gradient(90deg,transparent,#000_60%)]" />
      <div className="absolute right-[42px] top-[226px] h-2.5 w-6 -rotate-25 rounded-full bg-[#9a4fe0] blur-[3px]" />
      <div className="absolute left-[200px] top-0.5 h-3 w-5 -rotate-45 rounded-full bg-[#1c4f8c] blur-[3px]" />
      <div className="absolute left-[316px] top-5 h-2.5 w-4 rounded-full bg-[#1a4a66] blur-[3px]" />
      <div className="absolute left-1 top-[492px] h-1.5 w-5 -rotate-20 rounded-full bg-[#3a3a52] blur-[3px]" />
    </>
  );
}

export default function App() {
  return (
    <div className="min-h-screen bg-white pr-[3px] font-['Open_Sans',sans-serif]">
      <Gradients />
      <div className="relative flex flex-col bg-[#02030c]">
        <Wallpaper />
        <div className="relative flex h-[647px] justify-between pr-3.5 pt-[7px]">
          <div className="grid w-[66px] auto-rows-[92px]">
            <DesktopIcon icon="anchor" label="Anchor Bolts" />
            <DesktopIcon icon="sync" label={"Firefox Sync\nKey"} />
            <DesktopIcon icon="tuner" label={"TunerStudio\nMS"} />
            <DesktopIcon icon="detect" label="Detect issue" />
            <DesktopIcon icon="recycle" label="Recycle Bin" className="row-start-7" />
          </div>
          <div className="grid w-[66px] auto-rows-[92px]">
            <DesktopIcon icon="desktop" label="Desktop" className="row-start-6" />
            <DesktopIcon icon="wilkes" label={"Wilkes\nScien..."} className="row-start-7" />
          </div>
          <TunerWindow />
          <ControlPanelWindow />
          <DeviceManagerWindow />
          <PropertiesDialog />
        </div>
        <Taskbar />
      </div>
    </div>
  );
}
